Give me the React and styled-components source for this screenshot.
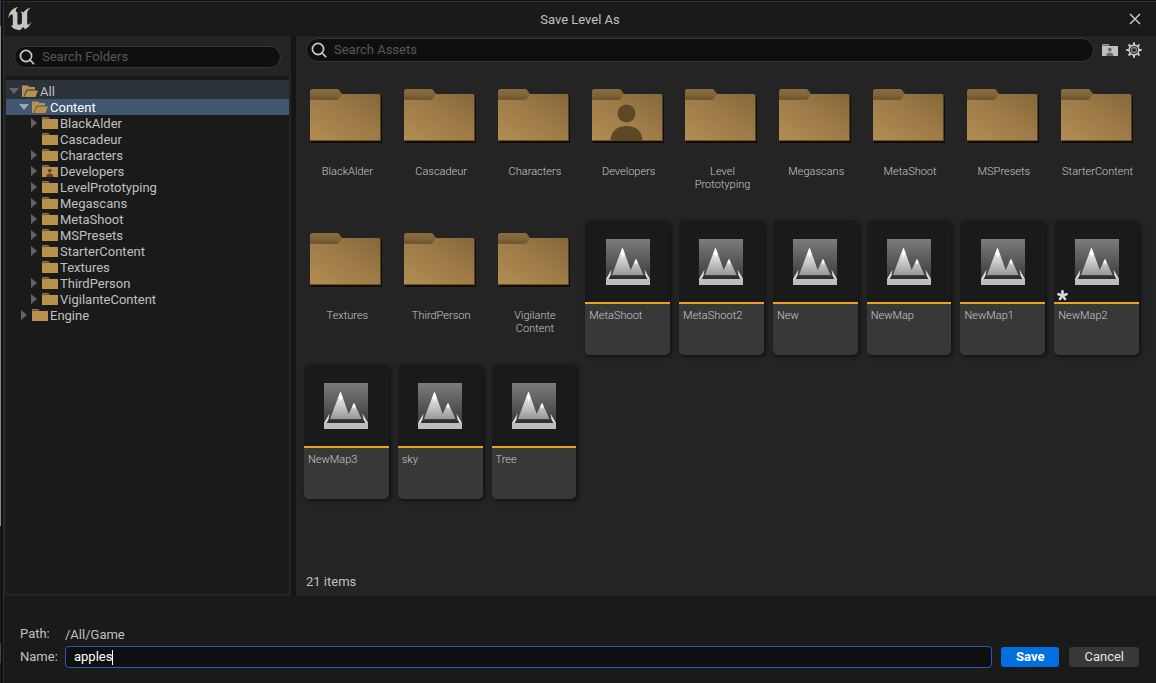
import React, { useState } from "react";
import styled, { createGlobalStyle } from "styled-components";

const GlobalStyle = createGlobalStyle`
  *, *::before, *::after { box-sizing: border-box; }
  body {
    margin: 0;
    background: #101010;
    color: #c0c0c0;
    font-family: Roboto, "Liberation Sans", sans-serif;
    font-size: 13px;
    line-height: 16px;
  }
  button, input { font: inherit; color: inherit; }
`;

const Desktop = styled.div`
  display: flex;
  min-height: 100vh;
`;

const Backdrop = styled.div`
  flex: none;
  width: 3px;
  border-left: 1px solid;
  border-image: linear-gradient(#24405e 0 4%, #8c8c8c 4% 77%, #1c1c1c 77% 94%, #34465c 94% 97%, #1c1c1c 97%) 1;
  background: #111111;
`;

const Dialog = styled.main`
  flex: 1;
  min-width: 0;
  display: flex;
  flex-direction: column;
  margin-top: 1px;
  border: solid #2e2e2e;
  border-width: 1px 0 0 1px;
  background: #1a1a1a;
`;

const TitleBar = styled.header`
  display: grid;
  grid-template-columns: 1fr auto 1fr;
  align-items: center;
  height: 34px;
  padding: 0 4px;
`;

const Title = styled.h1`
  margin: 0;
  padding-top: 2px;
  font-size: 13px;
  font-weight: 400;
`;

const IconButton = styled.button`
  display: flex;
  padding: 0;
  border: 0;
  background: none;
  color: #c8c8c8;
`;

const CloseButton = styled(IconButton)`
  justify-self: end;
  margin-right: 10px;
`;

const Panels = styled.div`
  flex: 1;
  display: flex;
  gap: 5px;
  background: #151515;
`;

const Sources = styled.section`
  flex: none;
  width: 287px;
  display: flex;
  flex-direction: column;
  padding: 0 2px 2px;
  background: #242424;
`;

const SourcesHeader = styled.div`
  padding: 10px 8px 8px;
`;

const SearchBox = styled.label`
  display: flex;
  align-items: center;
  flex: 1;
  gap: 7px;
  height: ${(p) => p.$height}px;
  padding: 0 12px 0 4px;
  border: 1px solid #363636;
  border-radius: 12px;
  background: #0f0f0f;
  color: #c8c8c8;
`;

const SearchInput = styled.input`
  flex: 1;
  min-width: 0;
  padding: 0;
  border: 0;
  outline: 0;
  background: none;
  &::placeholder { color: #575757; opacity: 1; }
`;

const Tree = styled.ul`
  flex: 1;
  margin: 0;
  padding: 0;
  list-style: none;
  border-top: 4px solid #1a1a1a;
  background: #1a1a1a;
`;

const rowFill = { ancestor: "#2c323a", selected: "#41566f" };

const TreeRow = styled.li`
  display: flex;
  align-items: center;
  gap: 2px;
  padding: ${(p) => (p.$depth === 0 && p.$state ? 3 : 0)}px 0 0 ${(p) => 2 + p.$depth * 10}px;
  background: ${(p) => rowFill[p.$state] || "none"};
  color: ${(p) => (p.$state === "selected" ? "#ffffff" : "#c0c0c0")};
`;

const TreeLabel = styled.span`
  padding-top: 2px;
  line-height: 14px;
`;

const Expander = styled.span`
  display: flex;
  justify-content: center;
  width: 12px;
  color: ${(p) => (p.$bright ? "#a0a8b2" : "#646464")};
`;

const Assets = styled.section`
  flex: 1;
  min-width: 0;
  display: flex;
  flex-direction: column;
  background: #242424;
`;

const AssetsHeader = styled.div`
  display: flex;
  align-items: center;
  gap: 8px;
  padding: 2px 14px 14px 10px;
`;

const Tiles = styled.ul`
  flex: 1;
  display: grid;
  grid-template-columns: repeat(auto-fill, minmax(84px, 1fr));
  align-content: start;
  gap: 9px;
  margin: 0;
  padding: 0 17px 0 8px;
  list-style: none;
`;

const Tile = styled.li`
  display: flex;
  flex-direction: column;
  height: 135px;
  color: #c8c8c8;
  font-size: 11px;
  font-weight: 300;
  line-height: 13px;
`;

const FolderTile = styled(Tile)`
  align-items: center;
  padding-top: 13px;
  gap: 22px;
  text-align: center;
`;

const LevelTile = styled(Tile)`
  overflow: hidden;
  border-radius: 5px;
  background: #383838;
  box-shadow: 2px 2px 4px #111111;
`;

const Thumbnail = styled.div`
  position: relative;
  display: flex;
  justify-content: center;
  height: 84px;
  padding-top: 18px;
  border-bottom: 2px solid #f0a01c;
  background: #1a1a1a;
`;

const DirtyMark = styled.svg`
  position: absolute;
  left: 2px;
  bottom: 0;
`;

const TileName = styled.span`
  padding: ${(p) => (p.$inset ? "5px 4px" : "0 0 0 2px")};
  white-space: pre-line;
`;

const Status = styled.p`
  margin: 0;
  padding: 0 10px 6px;
`;

const Footer = styled.form`
  display: grid;
  grid-template-columns: 37px 1fr auto auto;
  align-items: center;
  gap: 3px 8px;
  padding: 30px 17px 15px 16px;
`;

const PathLabel = styled.span`
  padding-bottom: 1px;
`;

const PathValue = styled.output`
  grid-column: 2 / -1;
`;

const NameField = styled.div`
  display: flex;
  align-items: center;
  height: 22px;
  padding-left: 8px;
  border: 1px solid #1f62b5;
  border-radius: 4px;
  background: #0f0f0f;
  color: #ffffff;
`;

const NameInput = styled.input`
  field-sizing: content;
  min-width: 1px;
  max-width: 100%;
  padding: 0;
  border: 0;
  outline: 0;
  background: none;
  caret-color: transparent;
`;

const Caret = styled.span`
  width: 1px;
  height: 15px;
  background: #ffffff;
`;

const Button = styled.button`
  height: 20px;
  margin-left: ${(p) => (p.$primary ? 1 : 2)}px;
  padding: 0 15px;
  border: 0;
  border-radius: 3px;
  background: ${(p) => (p.$primary ? "#0070e0" : "#383838")};
  color: ${(p) => (p.$primary ? "#ffffff" : "#e4e4e4")};
  font-weight: ${(p) => (p.$primary ? 700 : 400)};
  line-height: 20px;
`;

const UnrealLogo = () => (
  <svg width="24" height="24" viewBox="4.4 4.8 15 15" fill="#c4c4c4" aria-hidden="true">
    <path d="M19.1 13.7c-.2 1-1.1 3.6-4 5l-1.2-1.4-2 2a7.3 7.3 0 0 1-5.8-2.9c.2.1.4.1.6.1.4 0 .7-.1.7-.7v-5.4a.9.9 0 0 0-1.1-.9c-.9.2-1.7 2.5-1.7 2.5a7.3 7.3 0 0 1 2.6-5.6 7.4 7.4 0 0 1 3.7-1.7c-1 .6-1.6 1.5-1.6 2.3 0 1.2.8 1.1 1 .9v7.3c.2.5.6.7 1 .7.8 0 1.8-.9 1.8-.9V9.2c0-.6-.5-1.3-.9-1.6 0 0 .8-.1 1.5.4l.3.3c1.2-1.7 2.8-2.7 4.7-3.2-1.2.9-2.3 2.1-2.3 3.5v6.2c0 .9.6 1.3 1.1 1 .6-.4 1-1 1.6-2.1z" />
  </svg>
);

const CloseIcon = () => (
  <svg width="14" height="14" viewBox="0 0 14 14" stroke="currentColor" strokeWidth="1.5" aria-hidden="true">
    <path d="M2 2l10 10M12 2L2 12" />
  </svg>
);

const SearchIcon = () => (
  <svg width="16" height="16" viewBox="0 0 16 16" fill="none" stroke="currentColor" strokeWidth="1.7" aria-hidden="true">
    <circle cx="7" cy="7" r="5.6" />
    <path d="M11 11l3.600 3.600" strokeLinecap="round" />
  </svg>
);

const Arrow = ({ open }) => (
  <svg width="10" height="10" viewBox="0 0 10 10" fill="currentColor" aria-hidden="true">
    <path d={open ? "M0 2h10L5 8z" : "M2 0l6 5-6 5z"} />
  </svg>
);

const SmallFolder = ({ open, person, color = "#b8914f", mark = "#5c4726" }) => (
  <svg width="16" height="14" viewBox="0 0 16 14" fill={color} aria-hidden="true">
    {open ? (
      <>
        <path d="M0 13V1.6h6L7.6 3H13v2.4H4.6L1.4 13z" />
        <path d="M5.2 6.6H16L13.4 13H2.2z" />
      </>
    ) : (
      <>
        <path d="M0 1.2h6.4L8 2.4H0z" />
        <path d="M0 3h16V13H0z" />
      </>
    )}
    {person && (
      <g fill={mark}>
        <circle cx="7.8" cy="6.6" r="1.9" />
        <path d="M4.2 13c0-2.4 1.4-3.4 3.6-3.4s3.6 1 3.6 3.4z" />
      </g>
    )}
  </svg>
);

const GearIcon = () => (
  <svg width="16" height="16" viewBox="0 0 16 16" fill="none" stroke="currentColor" aria-hidden="true">
    <circle cx="8" cy="8" r="4.9" strokeWidth="1.6" />
    <circle cx="8" cy="8" r="2.5" strokeWidth="1.3" opacity="0.6" />
    {[0, 45, 90, 135, 180, 225, 270, 315].map((a) => (
      <path key={a} d="M8 0.3V3" strokeWidth="2" transform={`rotate(${a} 8 8)`} />
    ))}
  </svg>
);

const BigFolder = ({ person }) => (
  <svg width="72" height="54" viewBox="0 0 72 54" aria-hidden="true">
    <path d="M1 7h69.500q1.500 0 1.500 1.500V54H1z" fill="#120d06" />
    <path d="M0 6h28L31 5H68.500q2 0 2 2V52H0z" fill="url(#folderBody)" />
    <path d="M0 2.500Q0 0 2.500 0H27q1.500 0 2.300 1.200L32 5l-3 4.500q-.8 1.300-2.300 1.300H0z" fill="url(#folderTab)" />
    <path d="M0 51.500h70.500" stroke="#6d5230" />
    {person && (
      <g fill="#5c4726">
        <circle cx="34.500" cy="24.500" r="9" />
        <path d="M18.500 52c0-10 7-15 16-15s16 5 16 15z" />
      </g>
    )}
  </svg>
);

const LevelIcon = () => (
  <svg width="44" height="47" viewBox="0 0 44 47" aria-hidden="true">
    <path d="M0 1h44v46H0z" fill="url(#levelSky)" />
    <path d="M6 37L16 10.500Q16.500 9.500 17 10.500L24.700 32 29.500 21.500Q30 20.500 30.500 21.500L37.500 37z" fill="url(#levelRock)" />
    <path d="M16.500 10l-2.600 7 1.600-1 1.200 4 1.200-4 1.200 1zM30 21l-2 4.500 1.300-.5.8 2 .8-2 1 .2z" fill="#ffffff" />
    <path d="M4.500 38h35l1.500 3H3z" fill="#303030" />
    <path d="M0 41L5.500 31.500 4.500 37.500 2.500 41zM44 41L38.500 31.500 39.500 37.500 41.500 41z" fill="#dddddd" />
    <path d="M0 41h44v6H0z" fill="#bebebe" />
  </svg>
);

const Gradients = () => (
  <svg width="0" height="0" style={{ position: "absolute" }} aria-hidden="true">
    <defs>
      <linearGradient id="folderBody" x1="0" y1="1" x2="1" y2="0">
        <stop offset="0" stopColor="#b38d52" />
        <stop offset="0.55" stopColor="#9d7a47" />
        <stop offset="1" stopColor="#856739" />
      </linearGradient>
      <linearGradient id="folderTab" x1="0" y1="0" x2="0" y2="1">
        <stop offset="0" stopColor="#8a6c3f" />
        <stop offset="0.6" stopColor="#80633a" />
        <stop offset="1" stopColor="#674e2b" />
      </linearGradient>
      <linearGradient id="levelSky" x1="0" y1="0" x2="0" y2="1">
        <stop offset="0" stopColor="#7c7c7c" />
        <stop offset="0.85" stopColor="#3c3c3c" />
      </linearGradient>
      <linearGradient id="levelRock" x1="0" y1="0" x2="0" y2="1">
        <stop offset="0" stopColor="#f4f4f4" />
        <stop offset="0.5" stopColor="#cccccc" />
        <stop offset="1" stopColor="#989898" />
      </linearGradient>
    </defs>
  </svg>
);

const tree = [
  { name: "All", depth: 0, open: true, state: "ancestor" },
  { name: "Content", depth: 1, open: true, state: "selected" },
  { name: "BlackAlder", depth: 2 },
  { name: "Cascadeur", depth: 2, leaf: true },
  { name: "Characters", depth: 2 },
  { name: "Developers", depth: 2, person: true },
  { name: "LevelPrototyping", depth: 2 },
  { name: "Megascans", depth: 2 },
  { name: "MetaShoot", depth: 2 },
  { name: "MSPresets", depth: 2 },
  { name: "StarterContent", depth: 2 },
  { name: "Textures", depth: 2, leaf: true },
  { name: "ThirdPerson", depth: 2 },
  { name: "VigilanteContent", depth: 2 },
  { name: "Engine", depth: 1 },
];

const folders = [
  "BlackAlder", "Cascadeur", "Characters", "Developers", "Level\nPrototyping", "Megascans",
  "MetaShoot", "MSPresets", "StarterContent", "Textures", "ThirdPerson", "Vigilante\nContent",
];

const levels = ["MetaShoot", "MetaShoot2", "New", "NewMap", "NewMap1", "NewMap2", "NewMap3", "sky", "Tree"];

export default function App() {
  const [name, setName] = useState("apples");
  return (
    <Desktop>
      <GlobalStyle />
      <Gradients />
      <Backdrop />
      <Dialog>
        <TitleBar>
          <UnrealLogo />
          <Title>Save Level As</Title>
          <CloseButton type="button" aria-label="Close"><CloseIcon /></CloseButton>
        </TitleBar>
        <Panels>
          <Sources>
            <SourcesHeader>
              <SearchBox $height={22}>
                <SearchIcon />
                <SearchInput type="text" placeholder="Search Folders" aria-label="Search Folders" />
              </SearchBox>
            </SourcesHeader>
            <Tree>
              {tree.map((n) => (
                <TreeRow key={n.name} $depth={n.depth} $state={n.state}>
                  <Expander $bright={n.state === "selected"}>{!n.leaf && <Arrow open={n.open} />}</Expander>
                  <SmallFolder open={n.open} person={n.person} />
                  <TreeLabel>{n.name}</TreeLabel>
                </TreeRow>
              ))}
            </Tree>
          </Sources>
          <Assets>
            <AssetsHeader>
              <SearchBox $height={24}>
                <SearchIcon />
                <SearchInput type="text" placeholder="Search Assets" aria-label="Search Assets" />
              </SearchBox>
              <IconButton type="button" aria-label="Developer content">
                <SmallFolder person color="#c0c0c0" mark="#6a6a6a" />
              </IconButton>
              <IconButton type="button" aria-label="Settings"><GearIcon /></IconButton>
            </AssetsHeader>
            <Tiles>
              {folders.map((f) => (
                <FolderTile key={f}>
                  <BigFolder person={f === "Developers"} />
                  <TileName>{f}</TileName>
                </FolderTile>
              ))}
              {levels.map((l) => (
                <LevelTile key={l}>
                  <Thumbnail>
                    <LevelIcon />
                    {l === "NewMap2" && (
                      <DirtyMark width="13" height="13" viewBox="0 0 13 13" aria-label="Unsaved">
                        {[0, 72, 144, 216, 288].map((a) => (
                          <path key={a} d="M6.500 6.500V2.200" stroke="#d8d8d8" strokeWidth="2.600" strokeLinecap="round" transform={`rotate(${a} 6.5 6.5)`} />
                        ))}
                      </DirtyMark>
                    )}
                  </Thumbnail>
                  <TileName $inset>{l}</TileName>
                </LevelTile>
              ))}
            </Tiles>
            <Status>21 items</Status>
          </Assets>
        </Panels>
        <Footer onSubmit={(e) => e.preventDefault()}>
          <PathLabel>Path:</PathLabel>
          <PathValue>/All/Game</PathValue>
          <label htmlFor="level-name">Name:</label>
          <NameField>
            <NameInput id="level-name" type="text" value={name} onChange={(e) => setName(e.target.value)} />
            <Caret />
          </NameField>
          <Button type="submit" $primary>Save</Button>
          <Button type="button">Cancel</Button>
        </Footer>
      </Dialog>
    </Desktop>
  );
}
